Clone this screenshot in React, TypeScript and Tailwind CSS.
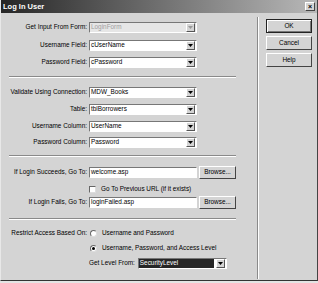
import React from 'react';

const font = "font-['Liberation_Sans',Arial,sans-serif]";

const Arrow: React.FC<{ disabled?: boolean }> = ({ disabled }) => (
  <span className="w-[9px] h-[9px] mr-[1px] bg-[#d4d4d4] border border-t-white border-l-white border-r-[#555] border-b-[#555] flex items-center justify-center shrink-0">
    <svg width="5" height="3" viewBox="0 0 5 3">
      <path d="M0 0h5L2.5 3z" fill={disabled ? '#999' : '#000'} />
    </svg>
  </span>
);

const Box: React.FC<{ value: string; select?: boolean; disabled?: boolean; width?: string; dark?: boolean }> = ({
  value,
  select,
  disabled,
  width = 'w-[108px]',
  dark,
}) => (
  <div
    className={`${width} h-[11px] flex items-center border border-t-[#777] border-l-[#777] border-b-white border-r-white ${
      disabled ? 'bg-[#e6e6e6]' : 'bg-white'
    }`}
  >
    <span
      className={`flex-1 h-full flex items-center pl-[1px] leading-none overflow-hidden whitespace-nowrap ${
        dark ? 'bg-[#262626] text-white mr-[2px]' : disabled ? 'text-[#a0a0a0]' : 'text-black'
      }`}
    >
      {value}
    </span>
    {select && <Arrow disabled={disabled} />}
  </div>
);

const Row: React.FC<{ label: string; className?: string; children: React.ReactNode }> = ({ label, className = '', children }) => (
  <div className={`grid grid-cols-[86px_1fr] gap-[2px] items-center ${className}`}>
    <span className="text-right leading-none whitespace-nowrap">{label}</span>
    <div className="flex items-center gap-[2px]">{children}</div>
  </div>
);

const Browse = () => (
  <button className="w-[37px] h-[13px] bg-[#d4d4d4] border border-t-white border-l-white border-r-[#444] border-b-[#444] leading-none text-black">
    Browse...
  </button>
);

const Sep: React.FC<{ className?: string }> = ({ className = '' }) => (
  <div className={`ml-[8px] w-[227px] h-[2px] border-t border-t-[#8a8a8a] border-b border-b-white ${className}`} />
);

const Radio: React.FC<{ checked?: boolean }> = ({ checked }) => (
  <span className="w-[7px] h-[7px] rounded-full bg-white border border-t-[#666] border-l-[#666] border-r-[#ddd] border-b-[#ddd] flex items-center justify-center shrink-0">
    {checked && <span className="w-[3px] h-[3px] rounded-full bg-black" />}
  </span>
);

const DialogButton: React.FC<{ label: string; def?: boolean }> = ({ label, def }) => (
  <button
    className={`w-[46px] h-[14px] bg-[#d4d4d4] leading-none text-black ${
      def
        ? 'border border-[#222] shadow-[inset_1px_1px_0_#fff,inset_-1px_-1px_0_#777]'
        : 'border border-t-white border-l-white border-r-[#444] border-b-[#444]'
    }`}
  >
    {label}
  </button>
);

export default function App() {
  return (
    <div className={`w-[318px] h-[283px] bg-[#e4e4e4] ${font} text-[6.4px] text-black`}>
      <div className="w-[318px] h-[281px] bg-[#d4d4d4] border-l border-l-[#e8e8e8] border-r border-r-[#444] border-b border-b-[#333] flex flex-col">
        {/* Title bar */}
        <div className="h-[13px] shrink-0 flex items-center justify-between pl-[2px] pr-[2px] bg-[linear-gradient(to_right,#262626,#5a5a5a_35%,#b8b8b8)]">
          <span className="text-white font-bold text-[7.5px] leading-none">Log In User</span>
          <span className="w-[10px] h-[9px] bg-[#d4d4d4] border border-t-white border-l-white border-r-[#444] border-b-[#444] flex items-center justify-center text-[7px] leading-none font-bold">
            ×
          </span>
        </div>

        <div className="flex flex-1">
          {/* Form */}
          <div className="w-[256px] flex flex-col">
            <Row label="Get Input From Form:" className="mt-[9px]">
              <Box value="LoginForm" select disabled />
            </Row>
            <Row label="Username Field:" className="mt-[7px]">
              <Box value="cUserName" select />
            </Row>
            <Row label="Password Field:" className="mt-[6px]">
              <Box value="cPassword" select />
            </Row>

            <Sep className="mt-[8px]" />

            <Row label="Validate Using Connection:" className="mt-[9px]">
              <Box value="MDW_Books" select />
            </Row>
            <Row label="Table:" className="mt-[6px]">
              <Box value="tblBorrowers" select />
            </Row>
            <Row label="Username Column:" className="mt-[6px]">
              <Box value="UserName" select />
            </Row>
            <Row label="Password Column:" className="mt-[5px]">
              <Box value="Password" select />
            </Row>

            <Sep className="mt-[7px]" />

            <Row label="If Login Succeeds, Go To:" className="mt-[9px]">
              <Box value="welcome.asp" />
              <Browse />
            </Row>
            <div className="mt-[6px] ml-[88px] flex items-center gap-[5px] h-[8px]">
              <span className="w-[7px] h-[7px] bg-white border border-t-[#666] border-l-[#666] border-r-[#ddd] border-b-[#ddd]" />
              <span className="leading-none">Go To Previous URL (if it exists)</span>
            </div>
            <Row label="If Login Fails, Go To:" className="mt-[3px]">
              <Box value="loginFailed.asp" />
              <Browse />
            </Row>

            <Sep className="mt-[9px]" />

            <div className="mt-[8px] grid grid-cols-[86px_1fr] gap-[2px] items-center h-[10px]">
              <span className="text-right leading-none whitespace-nowrap">Restrict Access Based On:</span>
              <div className="flex items-center gap-[5px] pl-[1px]">
                <Radio />
                <span className="leading-none">Username and Password</span>
              </div>
            </div>
            <div className="mt-[5px] ml-[89px] flex items-center gap-[5px] h-[10px]">
              <Radio checked />
              <span className="leading-none">Username, Password, and Access Level</span>
            </div>
            <div className="mt-[5px] ml-[88px] flex items-center gap-[3px]">
              <span className="leading-none">Get Level From:</span>
              <Box value="SecurityLevel" select dark width="w-[89px]" />
            </div>
          </div>

          {/* Divider */}
          <div className="w-[2px] mt-[4px] mb-[1px] border-l border-l-[#8a8a8a] border-r border-r-white" />

          {/* Buttons */}
          <div className="flex flex-col pl-[7px] pt-[6px] gap-[3px]">
            <DialogButton label="OK" def />
            <DialogButton label="Cancel" />
            <DialogButton label="Help" />
          </div>
        </div>
      </div>
    </div>
  );
}
